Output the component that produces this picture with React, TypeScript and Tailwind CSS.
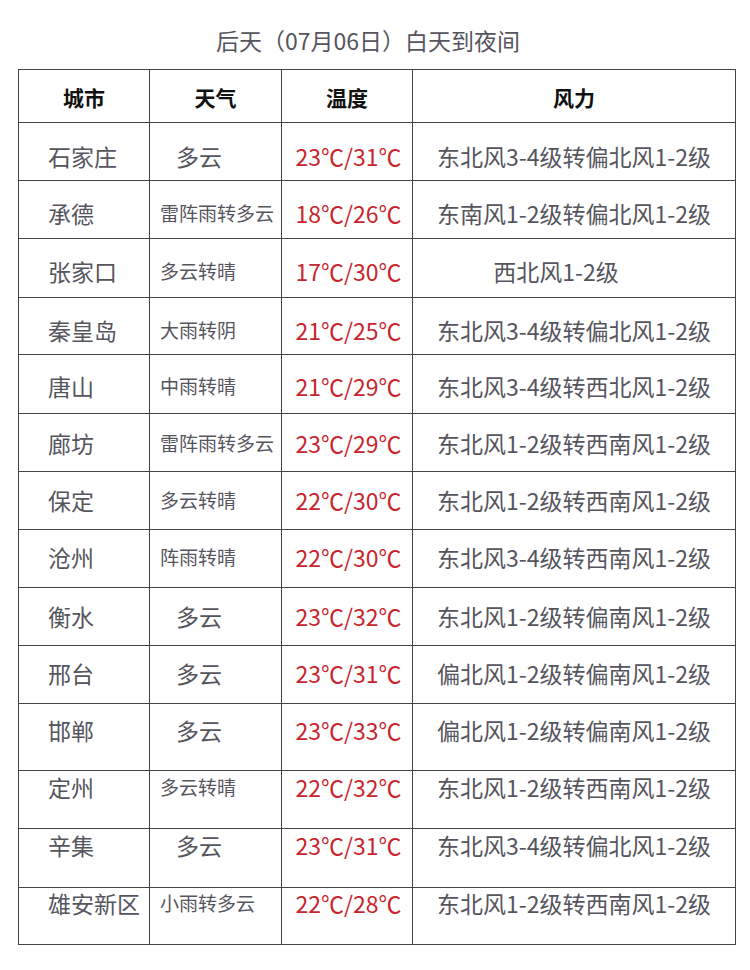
import React from 'react'

// 后天天气预报表：城市 / 天气 / 温度 / 风力
type Row = {
  city: string
  weather: string
  big?: boolean // "多云" 用大字号并缩进
  temp: string
  wind: string
  h: string
  pt: string
  windPad?: string
}

const ROWS: Row[] = [
  { city: '石家庄', weather: '多云', big: true, temp: '23℃/31℃', wind: '东北风3-4级转偏北风1-2级', h: 'h-[58px]', pt: 'pt-[18px]' },
  { city: '承德', weather: '雷阵雨转多云', temp: '18℃/26℃', wind: '东南风1-2级转偏北风1-2级', h: 'h-[58px]', pt: 'pt-[17px]' },
  { city: '张家口', weather: '多云转晴', temp: '17℃/30℃', wind: '西北风1-2级', h: 'h-[59px]', pt: 'pt-[17px]', windPad: 'pr-[36px]' },
  { city: '秦皇岛', weather: '大雨转阴', temp: '21℃/25℃', wind: '东北风3-4级转偏北风1-2级', h: 'h-[57px]', pt: 'pt-[17px]' },
  { city: '唐山', weather: '中雨转晴', temp: '21℃/29℃', wind: '东北风3-4级转西北风1-2级', h: 'h-[59px]', pt: 'pt-[16px]' },
  { city: '廊坊', weather: '雷阵雨转多云', temp: '23℃/29℃', wind: '东北风1-2级转西南风1-2级', h: 'h-[58px]', pt: 'pt-[14px]' },
  { city: '保定', weather: '多云转晴', temp: '22℃/30℃', wind: '东北风1-2级转西南风1-2级', h: 'h-[58px]', pt: 'pt-[13px]' },
  { city: '沧州', weather: '阵雨转晴', temp: '22℃/30℃', wind: '东北风3-4级转西南风1-2级', h: 'h-[58px]', pt: 'pt-[12px]' },
  { city: '衡水', weather: '多云', big: true, temp: '23℃/32℃', wind: '东北风1-2级转偏南风1-2级', h: 'h-[58px]', pt: 'pt-[13px]' },
  { city: '邢台', weather: '多云', big: true, temp: '23℃/31℃', wind: '偏北风1-2级转偏南风1-2级', h: 'h-[58px]', pt: 'pt-[12px]' },
  { city: '邯郸', weather: '多云', big: true, temp: '23℃/33℃', wind: '偏北风1-2级转偏南风1-2级', h: 'h-[67px]', pt: 'pt-[11px]' },
  { city: '定州', weather: '多云转晴', temp: '22℃/32℃', wind: '东北风1-2级转西南风1-2级', h: 'h-[58px]', pt: 'pt-[1px]' },
  { city: '辛集', weather: '多云', big: true, temp: '23℃/31℃', wind: '东北风3-4级转偏北风1-2级', h: 'h-[59px]', pt: 'pt-[1px]' },
  { city: '雄安新区', weather: '小雨转多云', temp: '22℃/28℃', wind: '东北风1-2级转西南风1-2级', h: 'h-[57px]', pt: 'pt-0' },
]

const GRID = 'grid grid-cols-[131px_132px_131px_323px]'
const CELL = 'border-r border-b border-[#444] whitespace-nowrap leading-[30px]'

export default function App() {
  return (
    <div className="w-[750px] min-h-[970px] bg-white pt-[25px] font-['Noto_Sans_CJK_SC',sans-serif]">
      <div className="text-center pr-[14px] text-[23px] leading-[30px] text-[#56555e]">
        后天（07月06日）白天到夜间
      </div>

      <div className="ml-[18px] mt-[14px] w-[718px] border-t border-l border-[#444]">
        {/* header */}
        <div className={`${GRID} h-[53px]`}>
          {['城市', '天气', '温度', '风力'].map((t) => (
            <div key={t} className={`${CELL} pt-[12px] text-center text-[21px] font-semibold text-[#111]`}>
              {t}
            </div>
          ))}
        </div>

        {ROWS.map((r) => (
          <div key={r.city} className={`${GRID} ${r.h}`}>
            <div className={`${CELL} ${r.pt} pl-[29px] text-[23px] text-[#56555e]`}>{r.city}</div>
            <div
              className={`${CELL} ${r.pt} text-[#56555e] ${r.big ? 'pl-[26px] text-[23px]' : 'pl-[10px] text-[19px]'}`}
            >
              {r.weather}
            </div>
            <div className={`${CELL} ${r.pt} pl-[3px] text-center text-[23px] text-[#c8262c]`}>{r.temp}</div>
            <div className={`${CELL} ${r.pt} ${r.windPad ?? ''} text-center text-[23px] text-[#56555e]`}>{r.wind}</div>
          </div>
        ))}
      </div>
    </div>
  )
}
